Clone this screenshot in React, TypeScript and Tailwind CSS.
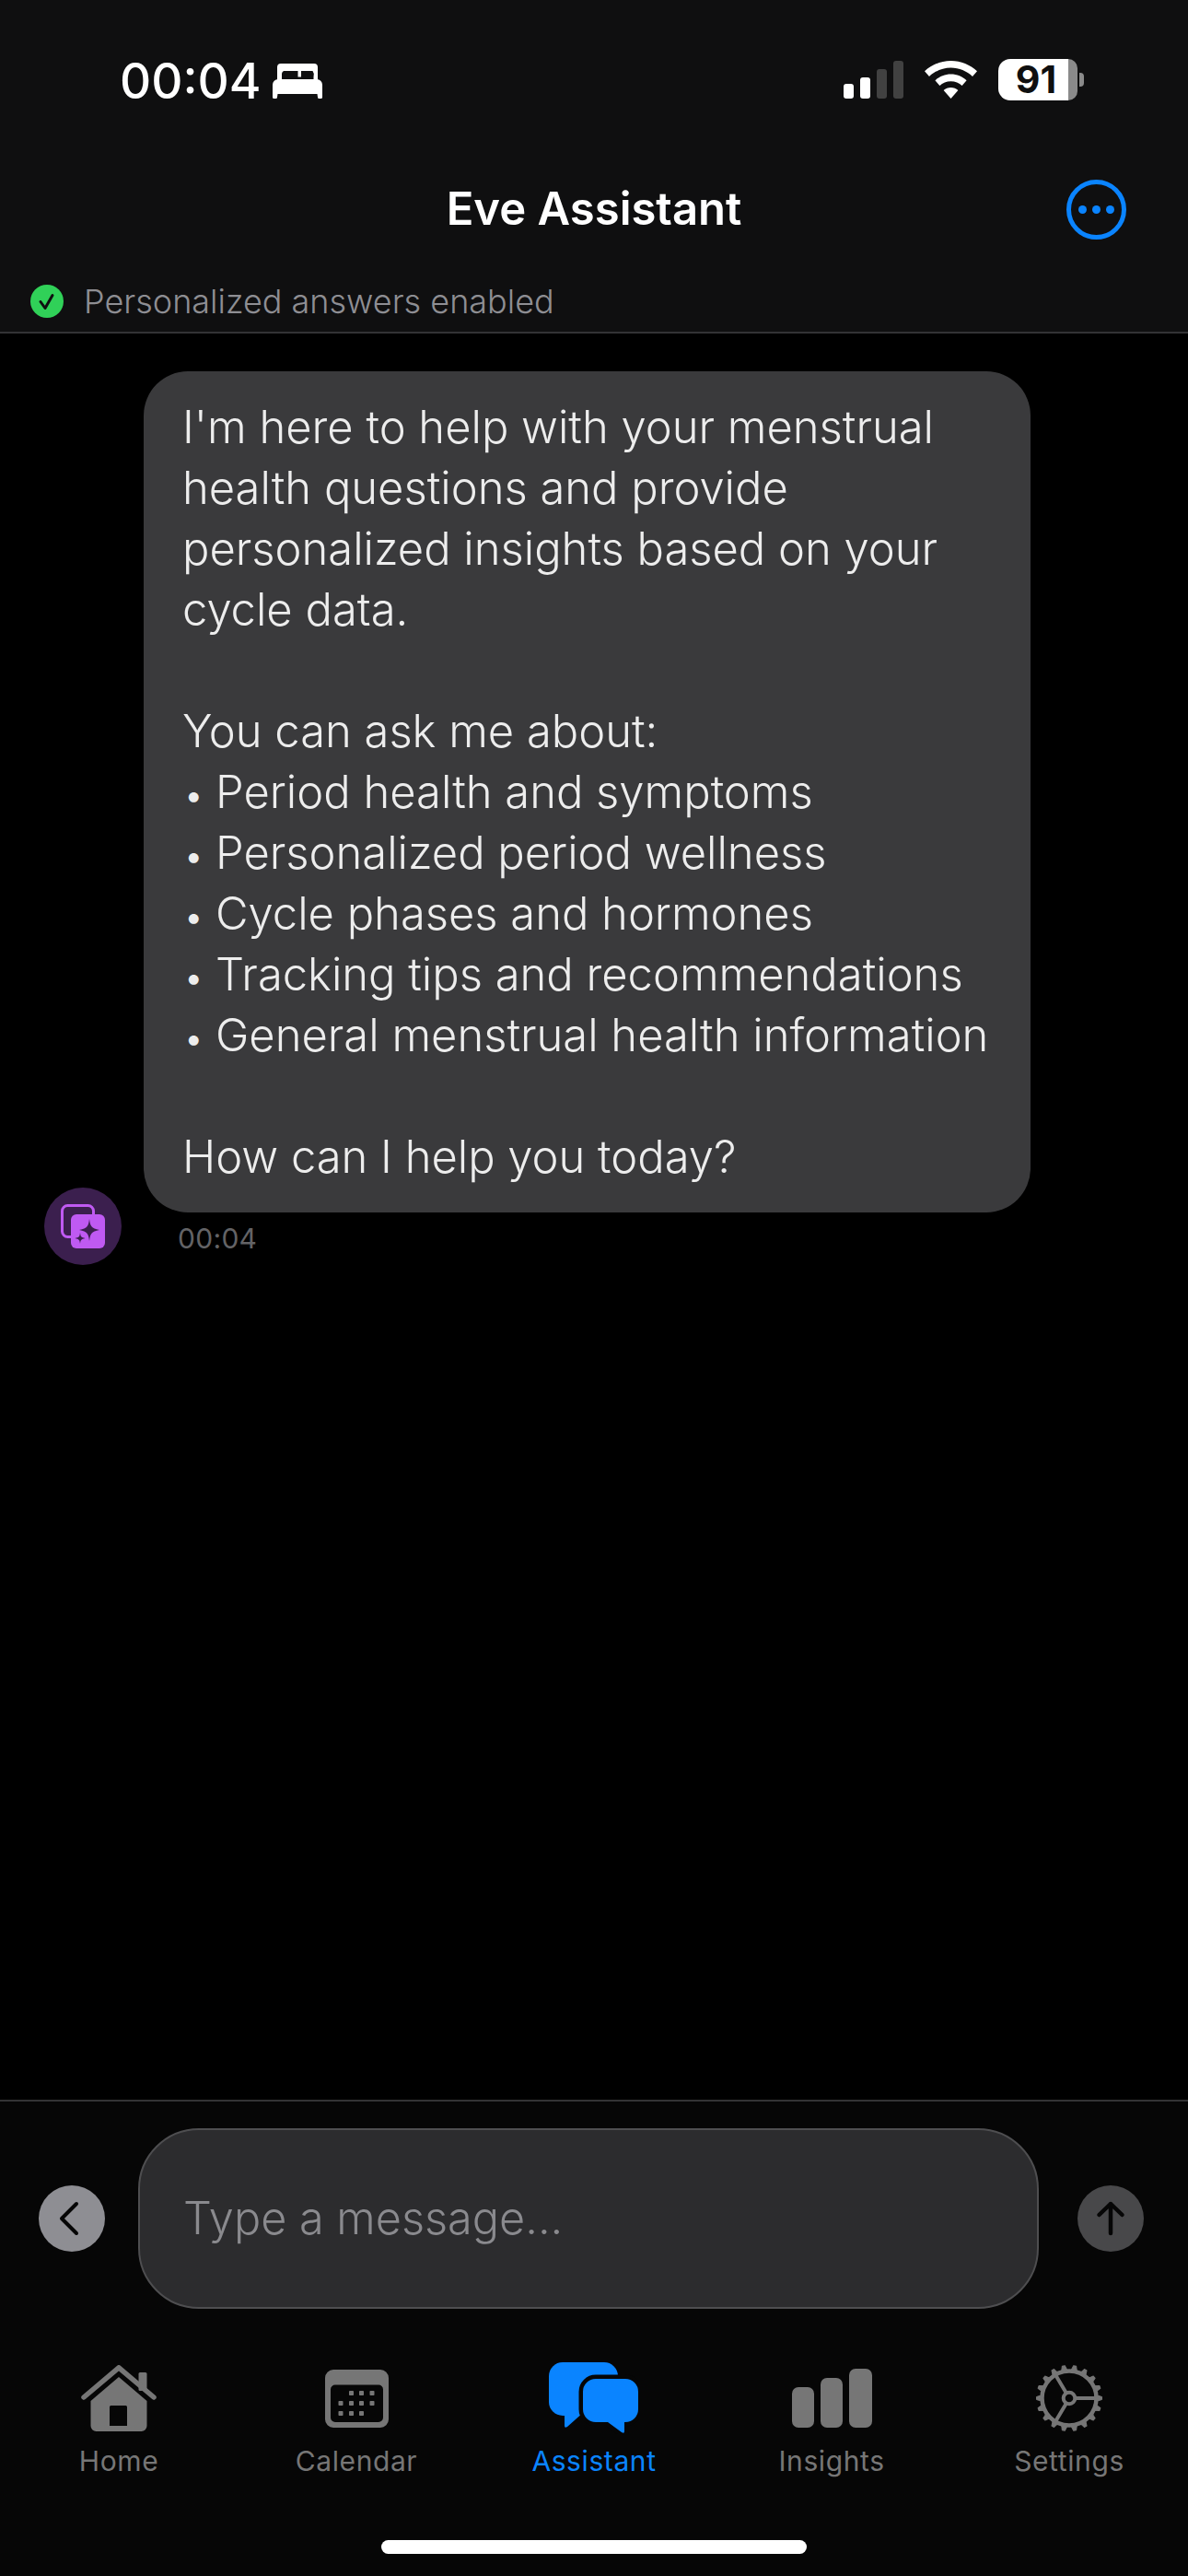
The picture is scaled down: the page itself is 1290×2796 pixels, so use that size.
const font = { fontFamily: 'Inter, "Liberation Sans", sans-serif' };

function Bed() {
  return (
    <svg width="54" height="38" viewBox="0 0 54 38" fill="white">
      <path fillRule="evenodd" d="M9 0h36a4 4 0 0 1 4 4v14h-4.500v-3.500a7 7 0 0 0-1-6.500H31v6.500h-3.500V8H12a4 4 0 0 0-2 3v7H5V4a4 4 0 0 1 4-4z" />
      <path d="M6 17h42a6 6 0 0 1 6 6v13.500a1.500 1.500 0 0 1-1.500 1.500h-2a1.500 1.500 0 0 1-1.500-1.500L48.500 33h-43L5 36.500A1.500 1.500 0 0 1 3.500 38h-2A1.500 1.500 0 0 1 0 36.500V23a6 6 0 0 1 6-6z" />
    </svg>
  );
}

function Signal() {
  return (
    <div className="flex items-end gap-[7px]">
      <div className="w-[11px] h-[16px] rounded-[3px] bg-white" />
      <div className="w-[11px] h-[23px] rounded-[3px] bg-white" />
      <div className="w-[11px] h-[32px] rounded-[3px] bg-[#414141]" />
      <div className="w-[11px] h-[41px] rounded-[3px] bg-[#414141]" />
    </div>
  );
}

function Wifi() {
  return (
    <svg width="57" height="41" viewBox="0 0 57 41" fill="white">
      <path d="M28.500 0C39.500 0 49.500 4.300 57 11.300L52 17C45.800 11.200 37.500 7.600 28.500 7.600S11.200 11.200 5 17L0 11.300C7.500 4.300 17.500 0 28.500 0z" />
      <path d="M28.500 14.500c6.600 0 12.600 2.600 17.100 6.800l-5 5.700c-3.200-3-7.400-4.800-12.100-4.800s-8.900 1.800-12.100 4.800l-5-5.700c4.500-4.200 10.500-6.800 17.100-6.800z" />
      <path d="M28.500 29c3 0 5.800 1.200 7.900 3.100L28.500 41l-7.900-8.900C22.700 30.200 25.500 29 28.500 29z" />
    </svg>
  );
}

function Battery() {
  return (
    <div className="flex items-center gap-[2px]">
      <div className="w-[86px] h-[45px] flex">
        <div className="w-[76px] h-full rounded-l-[13px] bg-white flex items-center justify-center pl-[6px] text-[41px] font-bold text-[#0f0f10] leading-none">91</div>
        <div className="w-[10px] h-full rounded-r-[13px] bg-[#8a8a8a]" />
      </div>
      <div className="w-[5px] h-[15px] rounded-r-[4px] bg-[#8a8a8a]" />
    </div>
  );
}

function Home() {
  return (
    <svg width="82" height="72" viewBox="0 0 82 72" fill="#767676">
      <rect x="62.500" y="8" width="9" height="20" rx="1.500" />
      <path d="M3 35 L41 2.800 L79 35" fill="none" stroke="#767676" strokeWidth="5.500" strokeLinecap="round" strokeLinejoin="round" />
      <path fillRule="evenodd" d="M41 13 L71.500 39 V66 a6 6 0 0 1-6 6 H16.500 a6 6 0 0 1-6-6 V39z M32.500 44 a1.500 1.500 0 0 0-1.500 1.500 V66 H50 V45.500 a1.500 1.500 0 0 0-1.500-1.500z" />
    </svg>
  );
}

function Calendar() {
  const dots: [number, number][] = [
    [26, 23], [37, 23], [48.500, 23],
    [14.500, 34], [26, 34], [37, 34], [48.500, 34],
    [14.500, 45], [26, 45], [37, 45],
  ];
  return (
    <svg width="69" height="63" viewBox="0 0 69 63" fill="#767676">
      <path fillRule="evenodd" d="M9 0h51a9 9 0 0 1 9 9v45a9 9 0 0 1-9 9H9a9 9 0 0 1-9-9V9a9 9 0 0 1 9-9z M11 16.500a5 5 0 0 0-5 5v30.500a5 5 0 0 0 5 5h47a5 5 0 0 0 5-5V21.500a5 5 0 0 0-5-5z" />
      {dots.map(([x, y]) => (
        <rect key={`${x}-${y}`} x={x} y={y} width="5" height="5" rx="0.800" />
      ))}
    </svg>
  );
}

function Chat() {
  return (
    <svg width="98" height="78" viewBox="0 0 98 78" fill="#0a84ff">
      <rect x="0" y="0" width="75" height="58" rx="15" />
      <path d="M17 54 V69 q0 3 3 1 L38 54z" />
      <path d="M51 18 H83 a14 14 0 0 1 14 14 V51 a14 14 0 0 1-14 14 H82 V75 q0 3-3 1 L64 65 H51 a14 14 0 0 1-14-14 V32 a14 14 0 0 1 14-14z" stroke="#060606" strokeWidth="9" paintOrder="stroke" />
    </svg>
  );
}

function Bars() {
  return (
    <div className="flex items-end gap-[7px]">
      <div className="w-[24px] h-[44px] rounded-[7px] bg-[#767676]" />
      <div className="w-[24px] h-[54px] rounded-[7px] bg-[#767676]" />
      <div className="w-[25px] h-[64px] rounded-[7px] bg-[#767676]" />
    </div>
  );
}

function Gear() {
  const teeth = Array.from({ length: 18 }, (_, i) => i * 20 + 10);
  return (
    <svg width="74" height="74" viewBox="0 0 74 74" fill="none" stroke="#767676">
      <circle cx="37" cy="37" r="29.500" strokeWidth="4.500" />
      {teeth.map((a) => (
        <path key={a} d="M33.500 8 L35.500 1.500 H38.500 L40.500 8z" fill="#767676" strokeWidth="1" strokeLinejoin="round" transform={`rotate(${a} 37 37)`} />
      ))}
      <circle cx="37" cy="37" r="6.300" strokeWidth="4" />
      <path d="M43 37H66 M33.900 31.600L22 11.500 M33.900 42.400L22 62.500" strokeWidth="4" />
    </svg>
  );
}

function Tab({ label, active, icon }: { label: string; active?: boolean; icon: React.ReactNode }) {
  return (
    <div className="flex-1 flex flex-col items-center">
      <div className="h-[84px] flex items-center justify-center">{icon}</div>
      <div className={`mt-[8px] text-[30px] leading-[36px] tracking-[0.6px] ${active ? 'text-[#0a84ff]' : 'text-[#767676]'}`}>{label}</div>
    </div>
  );
}

const lines: [string, boolean][] = [
  ["I'm here to help with your menstrual", false],
  ['health questions and provide', false],
  ['personalized insights based on your', false],
  ['cycle data.', false],
  ['\u00a0', false],
  ['You can ask me about:', false],
  ['Period health and symptoms', true],
  ['Personalized period wellness', true],
  ['Cycle phases and hormones', true],
  ['Tracking tips and recommendations', true],
  ['General menstrual health information', true],
  ['\u00a0', false],
  ['How can I help you today?', false],
];

export default function App() {
  return (
    <div style={font} className="w-[1290px] h-[2796px] bg-black text-white flex flex-col overflow-hidden">
      <header className="h-[362px] shrink-0 bg-[#0f0f10] border-b-2 border-[#333335] flex flex-col">
        <div className="h-[176px] shrink-0 flex justify-between pt-[60px] pl-[130px] pr-[113px]">
          <div className="flex items-start gap-[12px]">
            <span className="text-[53px] leading-[56px] font-medium">00:04</span>
            <span className="mt-[9px]"><Bed /></span>
          </div>
          <div className="flex items-start pt-[4px]">
            <span className="mt-[2px]"><Signal /></span>
            <span className="ml-[23px] mt-[2px]"><Wifi /></span>
            <span className="ml-[23px]"><Battery /></span>
          </div>
        </div>
        <div className="h-[90px] shrink-0 flex items-center justify-between px-[67px] mt-[6px]">
          <div className="w-[65px]" />
          <div className="text-[49px] leading-[60px] font-semibold">Eve Assistant</div>
          <div className="w-[65px] h-[65px] rounded-full border-[5px] border-[#0a84ff] flex items-center justify-center gap-[6px]">
            <span className="w-[9px] h-[9px] rounded-full bg-[#0a84ff]" />
            <span className="w-[9px] h-[9px] rounded-full bg-[#0a84ff]" />
            <span className="w-[9px] h-[9px] rounded-full bg-[#0a84ff]" />
          </div>
        </div>
        <div className="flex items-center pl-[33px] gap-[22px] mt-[33px]">
          <svg width="36" height="36" viewBox="0 0 36 36">
            <circle cx="18" cy="18" r="18" fill="#30d158" />
            <path d="M11 18.500l5 7 8-14" fill="none" stroke="#0f0f10" strokeWidth="3" strokeLinecap="round" strokeLinejoin="round" />
          </svg>
          <span className="text-[36px] font-[350] leading-[44px] text-[#8e8e93]">Personalized answers enabled</span>
        </div>
      </header>

      <main className="flex-1 relative pt-[41px] pl-[156px]">
        <div className="w-[963px] h-[913px] rounded-[48px] bg-[#3a3a3c] pl-[42px] pt-[28px] text-[#ededed] text-[48.900px] font-[350] leading-[66px] whitespace-nowrap">
          {lines.map(([text, bullet], i) => (
            <div key={i} className="h-[66px] flex items-baseline">
              {bullet && <span className="w-[36px] pl-[1px] text-[40px] leading-[66px]">•</span>}
              <span className="leading-[66px]">{text}</span>
            </div>
          ))}
        </div>
        <div className="pl-[37px] mt-[9px] text-[30px] leading-[38px] tracking-[0.3px] text-[#636366]">00:04</div>
        <div className="absolute left-[48px] top-[927px] w-[84px] h-[84px] rounded-full bg-[#3b1f4e] flex items-center justify-center">
          <svg width="48" height="48" viewBox="0 0 48 48">
            <rect x="1.500" y="1.500" width="34" height="34" rx="6" fill="none" stroke="#bf5af2" strokeWidth="3" />
            <rect x="11" y="11" width="37" height="37" rx="6" fill="#bf5af2" />
            <path d="M31 16 C32 24 33 26 42 28 C33 30 32 32 31 40 C30 32 29 30 20 28 C29 26 30 24 31 16z" fill="#3b1f4e" />
            <path d="M21 31 C21.500 35 22 36 26.500 37 C22 38 21.500 39 21 43 C20.500 39 20 38 15.500 37 C20 36 20.500 35 21 31z" fill="#3b1f4e" />
          </svg>
        </div>
      </main>

      <footer className="h-[517px] shrink-0 bg-[#060606] border-t-2 border-[#333335] flex flex-col">
        <div className="h-[254px] shrink-0 flex items-center pl-[42px]">
          <div className="w-[72px] h-[72px] rounded-full bg-[#8e8e93] flex items-center justify-center">
            <svg width="72" height="72" viewBox="0 0 72 72" fill="none" stroke="#060606" strokeWidth="4" strokeLinecap="round" strokeLinejoin="round">
              <path d="M41 20 L25 36 L41 52" />
            </svg>
          </div>
          <div className="ml-[36px] w-[978px] h-[196px] rounded-[66px] bg-[#2c2c2e] border-2 border-[#4e4e50] pl-[47px] flex items-center text-[48.600px] font-[350] text-[#8a8a8e]">Type a message...</div>
          <div className="ml-[42px] w-[72px] h-[72px] rounded-full bg-[#48484a] flex items-center justify-center">
            <svg width="72" height="72" viewBox="0 0 72 72" fill="none" stroke="#060606" strokeWidth="4.500" strokeLinecap="round" strokeLinejoin="round">
              <path d="M36 52 V20 M23.500 32 L36 20 L48.500 32" />
            </svg>
          </div>
        </div>
        <nav className="flex mt-[26px]">
          <Tab label="Home" icon={<Home />} />
          <Tab label="Calendar" icon={<Calendar />} />
          <Tab label="Assistant" active icon={<Chat />} />
          <Tab label="Insights" icon={<Bars />} />
          <Tab label="Settings" icon={<Gear />} />
        </nav>
        <div className="mt-[68px] mx-auto w-[462px] h-[15px] rounded-full bg-white" />
      </footer>
    </div>
  );
}
